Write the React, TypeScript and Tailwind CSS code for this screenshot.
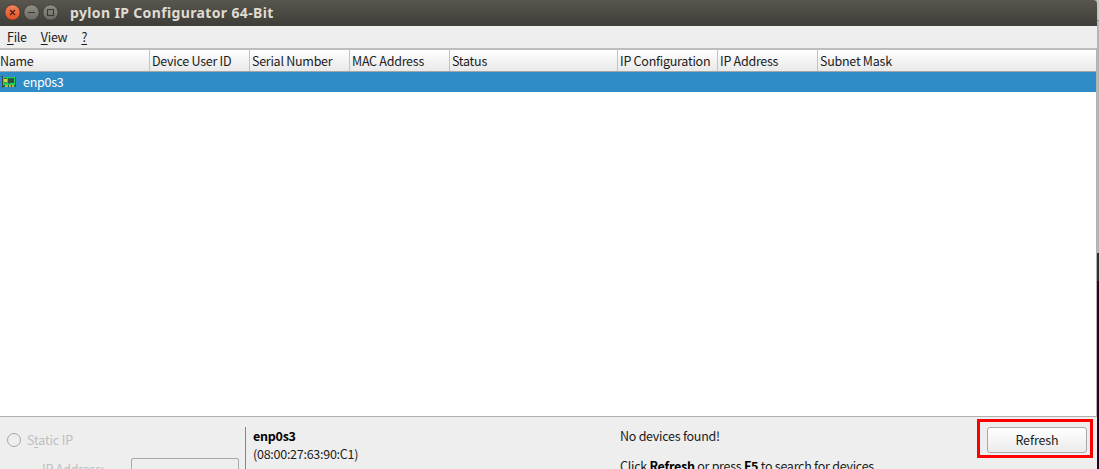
const columns = [
  { label: 'Name', className: 'w-[150px]' },
  { label: 'Device User ID', className: 'w-[100px] pl-0.5' },
  { label: 'Serial Number', className: 'w-[100px] pl-0.5' },
  { label: 'MAC Address', className: 'w-[100px] pl-0.5' },
  { label: 'Status', className: 'w-[168px] pl-0.5' },
  { label: 'IP Configuration', className: 'w-[100px] pl-0.5' },
  { label: 'IP Address', className: 'w-[100px] pl-0.5' },
  { label: 'Subnet Mask', className: 'flex-1 pl-0.5' },
];

function WindowButtons() {
  return (
    <svg width="60" height="26" viewBox="0 0 60 26" className="shrink-0">
      <defs>
        <linearGradient id="close" x1="0" y1="0" x2="0" y2="1">
          <stop offset="0" stopColor="#f6845c" />
          <stop offset="1" stopColor="#e34f20" />
        </linearGradient>
        <linearGradient id="plain" x1="0" y1="0" x2="0" y2="1">
          <stop offset="0" stopColor="#918e85" />
          <stop offset="1" stopColor="#6c6a63" />
        </linearGradient>
      </defs>
      <circle cx="12.5" cy="12.5" r="7.7" fill="url(#close)" stroke="#3a3934" strokeWidth="0.8" />
      <path d="M10 10l5 5M15 10l-5 5" stroke="#4a2317" strokeWidth="1.3" />
      <circle cx="31.5" cy="12.5" r="7.7" fill="url(#plain)" stroke="#3a3934" strokeWidth="0.8" />
      <path d="M28 12.5h7" stroke="#3a3934" strokeWidth="1.1" />
      <circle cx="50.5" cy="12.5" r="7.7" fill="url(#plain)" stroke="#3a3934" strokeWidth="0.8" />
      <rect x="47.5" y="9.5" width="6" height="6" fill="none" stroke="#3a3934" strokeWidth="1.1" />
    </svg>
  );
}

function NetworkCardIcon() {
  return (
    <svg width="16" height="20" viewBox="0 0 16 20" shapeRendering="crispEdges" className="shrink-0">
      <path d="M0 4h2v12h-1v-11h-1z" fill="#3b4a58" />
      <path d="M2 5h13v10h-13z" fill="#17703a" />
      <path d="M2 5h12v1h-12zM2 6h1v7h-1zM6 6h1v6h-1zM13 6h1v7h-1zM2 11h12v2h-12z" fill="#25cf55" />
      <path d="M3 7h3v3h-3z" fill="#d5d94c" />
      <path d="M7 7h6v4h-6z" fill="#2c5148" />
      <path d="M3 10h3v1h-3zM7 11h2v1h-2z" fill="#1d9a42" />
      <path d="M4 13h3v2h-3zM8 13h2v2h-2zM11 13h2v2h-2z" fill="#c9b045" />
    </svg>
  );
}

function TitleBar() {
  return (
    <div className="flex h-[26px] shrink-0 items-center rounded-tr-[4px] bg-linear-to-b from-[#59564e] to-[#3e3d38]">
      <WindowButtons />
      <h1 className="ml-[10px] font-['Noto_Sans'] text-[14px] leading-[26px] font-bold tracking-[0.36px] whitespace-nowrap text-[#dfdbd2]">
        pylon IP Configurator 64-Bit
      </h1>
    </div>
  );
}

function MenuBar() {
  return (
    <div className="flex h-[22px] shrink-0 gap-[14px] bg-[#eeeeee] pl-[7px] leading-[22px]">
      <span><u className="underline-offset-2">F</u>ile</span>
      <span><u className="underline-offset-2">V</u>iew</span>
      <span><u className="underline-offset-2">?</u></span>
    </div>
  );
}

function DeviceTable() {
  return (
    <div className="flex h-[369px] shrink-0 flex-col border-t-2 border-r border-b border-t-[#bdbdbd] border-r-[#b4b4b4] border-b-[#b0b2b2] bg-white">
      <div className="flex h-[22px] shrink-0 border-b border-[#a5a5a5] bg-linear-to-b from-white to-[#e9e9e9] leading-[22px]">
        {columns.map((column) => (
          <div key={column.label} className={`${column.className} shrink-0 border-r border-[#c3c3c3] last:border-r-0`}>
            {column.label}
          </div>
        ))}
      </div>
      <div className="flex h-5 shrink-0 items-center bg-[#308cc6] pl-px leading-5 text-white">
        <NetworkCardIcon />
        <span className="ml-[6px]">enp0s3</span>
      </div>
    </div>
  );
}

function StaticSettings() {
  return (
    <div className="w-[245px] shrink-0 text-[#bebebe]">
      <div className="flex items-center pt-[14px] pl-[7px] leading-[18px]">
        <span className="size-[14px] rounded-full border border-[#a9a9a9]" />
        <span className="ml-[6px] tracking-[-0.15px]">S<u className="underline-offset-2">t</u>atic IP</span>
      </div>
      <div className="mt-[9px] flex pl-[42px]">
        <span className="w-[89px] leading-[22px] tracking-[-0.2px]">IP Address:</span>
        <span className="h-[24px] w-[108px] rounded-[2px] border border-[#a9a9a9]" />
      </div>
    </div>
  );
}

function DetailsPanel() {
  return (
    <div className="flex h-[52px] overflow-hidden bg-[#eeeeee] leading-[18px]">
      <StaticSettings />
      <div className="mt-[10px] w-[371px] shrink-0 border-l border-[#858585] pl-[7px]">
        <p className="font-bold text-black">enp0s3</p>
        <p>(08:00:27:63:90:C1)</p>
      </div>
      <div className="w-[361px] shrink-0 pt-[10px] pl-[4px] whitespace-nowrap">
        <p>No devices found!</p>
        <p className="mt-3">
          Click <b className="text-black">Refresh</b> or press <b className="text-black">F5</b> to search for devices.
        </p>
      </div>
      <div className="mt-[2px] h-[39px] w-[116px] shrink-0 border-[3px] border-[#ff0000] px-[7px] pt-[5px]">
        <button className="h-[26px] w-[100px] rounded-[3px] border border-[#aaaaaa] bg-linear-to-b from-white to-[#ebebeb] leading-6 tracking-[-0.1px]">
          Refresh
        </button>
      </div>
    </div>
  );
}

export default function App() {
  return (
    <div className="flex h-[469px] w-[1099px] overflow-hidden bg-[#b4b4b4] font-['Noto_Sans_CJK_SC',sans-serif] text-[12.5px] tracking-[-0.26px] text-[#1c1c1c]">
      <main className="flex w-[1097px] shrink-0 flex-col">
        <TitleBar />
        <MenuBar />
        <DeviceTable />
        <DetailsPanel />
      </main>
      <div className="flex w-[2px] flex-col">
        <div className="h-5 bg-[#c5c4c2]" />
        <div className="h-px bg-[#8c8c8c]" />
        <div className="h-[232px] bg-[#b5b5b5]" />
        <div className="h-7 bg-[#2d332f]" />
        <div className="flex-1 bg-[#2c001e]" />
      </div>
    </div>
  );
}
